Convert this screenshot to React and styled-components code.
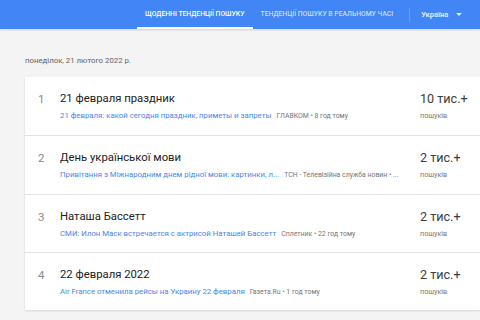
import React from "react";
import styled, { createGlobalStyle } from "styled-components";

const GlobalStyle = createGlobalStyle`
  html, body {
    margin: 0;
    padding: 0;
    background: #f4f4f4;
    font-family: Roboto, "Liberation Sans", sans-serif;
  }
`;

const Page = styled.div`
  width: 480px;
  height: 320px;
  overflow: hidden;
  background: #f4f4f4;
`;

const Header = styled.header`
  height: 29px;
  background: #4285f4;
  display: flex;
  align-items: stretch;
  padding-left: 137px;
  box-shadow: 0 1px 2px rgba(0, 0, 0, 0.15);
`;

const Tab = styled.div`
  display: flex;
  align-items: center;
  padding: 0 8px;
  font-size: 6.8px;
  font-weight: 500;
  color: ${(p) => (p.active ? "#ffffff" : "rgba(255,255,255,0.72)")};
  border-bottom: 2px solid ${(p) => (p.active ? "#ffffff" : "transparent")};
  box-sizing: border-box;
  white-space: nowrap;
`;

const Divider = styled.div`
  width: 1px;
  height: 14px;
  align-self: center;
  margin-left: 8px;
  background: rgba(255, 255, 255, 0.2);
`;

const Country = styled.div`
  display: flex;
  align-items: center;
  gap: 8px;
  margin-left: 11px;
  font-size: 7.5px;
  font-weight: 700;
  color: rgba(255, 255, 255, 0.85);
`;

const Caret = styled.span`
  width: 0;
  height: 0;
  border-left: 3px solid transparent;
  border-right: 3px solid transparent;
  border-top: 3px solid rgba(255, 255, 255, 0.85);
`;

const Content = styled.main`
  padding: 27px 0 0 25px;
`;

const DateLine = styled.div`
  font-size: 7.8px;
  color: #5f6368;
  height: 21px;
`;

const Card = styled.section`
  background: #fff;
  box-shadow: 0 1px 2px rgba(0, 0, 0, 0.12);
`;

const Row = styled.div`
  display: flex;
  align-items: flex-start;
  height: 58.3px;
  box-sizing: border-box;
  padding-top: 14px;
  border-top: ${(p) => (p.first ? "none" : "1px solid #e3e3e3")};
`;

const Index = styled.div`
  width: 35px;
  padding-left: 13px;
  box-sizing: border-box;
  font-size: 11.5px;
  color: #8a8a8a;
  line-height: 16px;
`;

const Main = styled.div`
  flex: 1;
  min-width: 0;
`;

const Title = styled.div`
  font-size: 11.3px;
  color: #212121;
  line-height: 16px;
`;

const Sub = styled.div`
  display: flex;
  align-items: baseline;
  gap: 5px;
  margin-top: 4px;
  white-space: nowrap;
`;

const Link = styled.span`
  font-size: 7.8px;
  color: #4a86e8;
`;

const Source = styled.span`
  font-size: 6.9px;
  color: #757575;
`;

const Count = styled.div`
  width: 60px;
  flex-shrink: 0;
`;

const Value = styled.div`
  font-size: 12.6px;
  color: #3c3c3c;
  line-height: 16px;
`;

const Label = styled.div`
  font-size: 7.2px;
  color: #777;
  margin-top: 4px;
`;

const rows = [
  {
    title: "21 февраля праздник",
    link: "21 февраля: какой сегодня праздник, приметы и запреты",
    source: "ГЛАВКОМ • 8 год тому",
    value: "10 тис.+",
  },
  {
    title: "День української мови",
    link: "Привітання з Міжнародним днем рідної мови: картинки, л...",
    source: "ТСН - Телевізійна служба новин • ...",
    value: "2 тис.+",
  },
  {
    title: "Наташа Бассетт",
    link: "СМИ: Илон Маск встречается с актрисой Наташей Бассетт",
    source: "Сплетник • 22 год тому",
    value: "2 тис.+",
  },
  {
    title: "22 февраля 2022",
    link: "Air France отменила рейсы на Украину 22 февраля",
    source: "Газета.Ru • 1 год тому",
    value: "2 тис.+",
  },
];

export default function App() {
  return (
    <Page>
      <GlobalStyle />
      <Header>
        <Tab active>ЩОДЕННІ ТЕНДЕНЦІЇ ПОШУКУ</Tab>
        <Tab>ТЕНДЕНЦІЇ ПОШУКУ В РЕАЛЬНОМУ ЧАСІ</Tab>
        <Divider />
        <Country>
          Україна
          <Caret />
        </Country>
      </Header>
      <Content>
        <DateLine>понеділок, 21 лютого 2022 р.</DateLine>
        <Card>
          {rows.map((r, i) => (
            <Row key={i} first={i === 0}>
              <Index>{i + 1}</Index>
              <Main>
                <Title>{r.title}</Title>
                <Sub>
                  <Link>{r.link}</Link>
                  <Source>{r.source}</Source>
                </Sub>
              </Main>
              <Count>
                <Value>{r.value}</Value>
                <Label>пошуків</Label>
              </Count>
            </Row>
          ))}
        </Card>
      </Content>
    </Page>
  );
}
